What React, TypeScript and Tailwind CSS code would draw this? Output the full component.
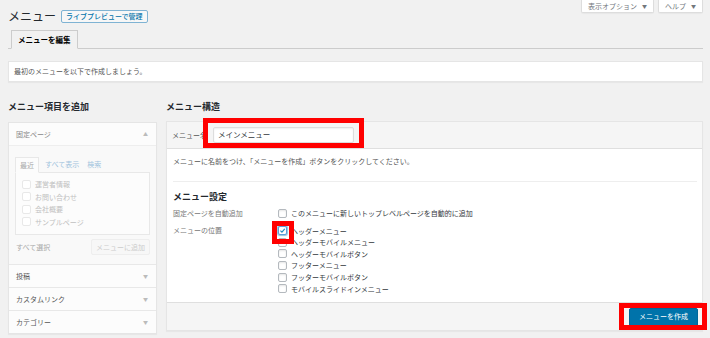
import * as React from 'react'

function Check({ checked = false, faded = false }: { checked?: boolean; faded?: boolean }) {
  return (
    <span
      className={
        'relative inline-flex h-[9px] w-[9px] shrink-0 items-center justify-center rounded-[2px] border bg-white ' +
        (faded
          ? 'border-[#e8e8e8]'
          : checked
            ? 'border-[#5b9dd9] shadow-[0_0_1px_1px_rgba(30,140,190,0.5)]'
            : 'border-[#b4b9be] shadow-[inset_0_1px_2px_rgba(0,0,0,0.1)]')
      }
    >
      {checked && (
        <svg viewBox="0 0 10 10" className="h-[7px] w-[7px]">
          <path d="M2 5.2 L4.2 7.4 L8.2 2.6" fill="none" stroke="#1e8cbe" strokeWidth="1.6" />
        </svg>
      )}
    </span>
  )
}

const locations = [
  'ヘッダーメニュー',
  'ヘッダーモバイルメニュー',
  'ヘッダーモバイルボタン',
  'フッターメニュー',
  'フッターモバイルボタン',
  'モバイルスライドインメニュー',
]

const pages = ['運営者情報', 'お問い合わせ', '会社概要', 'サンプルページ']

export default function App() {
  return (
    <div className="h-[338px] w-[710px] overflow-hidden bg-[#f1f1f1] pr-[7px] pl-[8px] font-['Noto_Sans_CJK_JP',sans-serif] text-[#444]">
      {/* page header */}
      <div className="flex h-[24px] items-start justify-between">
        <div className="flex items-center pt-[8px]">
          <span className="text-[12px] leading-[16px] text-[#23282d]">メニュー</span>
          <span className="ml-[5px] h-[13px] rounded-[2px] border border-[#7fb3d3] bg-[#f7f7f7] px-[4px] text-[7px] leading-[11px] font-medium text-[#0073aa]">
            ライブプレビューで管理
          </span>
        </div>
        <div className="flex gap-[4px]">
          <span className="flex h-[13px] w-[73px] items-center justify-center gap-[5px] rounded-b-[2px] border border-t-0 border-[#ddd] bg-white text-[7px] text-[#72777c] shadow-[0_1px_1px_rgba(0,0,0,0.04)]">
            表示オプション<span className="text-[5px]">▼</span>
          </span>
          <span className="flex h-[13px] w-[45px] items-center justify-center gap-[5px] rounded-b-[2px] border border-t-0 border-[#ddd] bg-white text-[7px] text-[#72777c] shadow-[0_1px_1px_rgba(0,0,0,0.04)]">
            ヘルプ<span className="text-[5px]">▼</span>
          </span>
        </div>
      </div>

      {/* tabs */}
      <div className="mt-[6px] flex border-b border-[#ccc] pl-[3px]">
        <span className="-mb-px h-[19px] border border-[#ccc] border-b-[#f1f1f1] bg-[#f1f1f1] px-[6px] text-[7.5px] leading-[17px] font-bold text-[#000]">
          メニューを編集
        </span>
      </div>

      {/* notice */}
      <div className="mt-[12px] flex h-[21px] items-center border border-[#e5e5e5] bg-white pl-[5px] text-[7px] text-[#555] shadow-[0_1px_1px_rgba(0,0,0,0.04)]">
        最初のメニューを以下で作成しましょう。
      </div>

      <div className="flex items-start gap-[9px]">
        {/* add menu items */}
        <div className="w-[149px] shrink-0 pt-[19px]">
          <div className="h-[12px] text-[9px] leading-[12px] font-bold text-[#23282d]">メニュー項目を追加</div>
          <div className="mt-[9px] border border-[#e5e5e5] bg-[#fcfcfc] shadow-[0_1px_1px_rgba(0,0,0,0.04)]">
            <div className="flex h-[23px] items-center justify-between border-b border-[#eee] pr-[8px] pl-[7px] text-[7px] text-[#888]">
              固定ページ<span className="text-[5px] text-[#bbb]">▲</span>
            </div>
            <div className="bg-[#f9f9f9] px-[6px] pt-[11px] pb-[9px]">
              <div className="flex items-end text-[7px]">
                <span className="-mb-px h-[16px] border border-[#e8e8e8] border-b-[#fcfcfc] bg-[#fcfcfc] px-[4px] leading-[15px] text-[#aaa]">
                  最近
                </span>
                <span className="ml-[6px] leading-[15px] text-[#9fc3dd]">すべて表示</span>
                <span className="ml-[8px] leading-[15px] text-[#9fc3dd]">検索</span>
              </div>
              <div className="border border-[#e8e8e8] bg-[#fcfcfc] pt-[5px] pb-[6px] pl-[6px]">
                {pages.map((p) => (
                  <div key={p} className="flex h-[12.5px] items-center gap-[4px] text-[7px] text-[#c0c0c0]">
                    <Check faded />
                    {p}
                  </div>
                ))}
              </div>
              <div className="mt-[4px] flex h-[16px] items-center justify-between pl-[1px] text-[7px]">
                <span className="text-[#aaa]">すべて選択</span>
                <span className="flex h-[16px] w-[59px] items-center justify-center rounded-[2px] border border-[#eee] bg-[#f7f7f7] text-[#ccc]">
                  メニューに追加
                </span>
              </div>
            </div>
            {['投稿', 'カスタムリンク', 'カテゴリー'].map((t) => (
              <div
                key={t}
                className="flex h-[23px] items-center justify-between border-t border-[#e8e8e8] pr-[8px] pl-[7px] text-[7px] text-[#555]"
              >
                {t}
                <span className="text-[5px] text-[#bbb]">▼</span>
              </div>
            ))}
          </div>
        </div>

        {/* menu structure */}
        <div className="flex-1 pt-[19px]">
          <div className="h-[12px] text-[9px] leading-[12px] font-bold text-[#23282d]">メニュー構造</div>
          <div className="mt-[8px] flex h-[210px] flex-col border border-[#e5e5e5] bg-white shadow-[0_1px_1px_rgba(0,0,0,0.04)]">
            <div className="flex h-[27px] items-center border-b border-[#dfdfdf] bg-[#f5f5f5] pl-[5px]">
              <span className="w-[41px] text-[7px] text-[#555]">メニュー名</span>
              <div className="relative">
                <div className="h-[16px] w-[141px] rounded-[2px] border border-[#ddd] bg-white pl-[4px] text-[7.5px] leading-[14px] text-[#32373c] shadow-[inset_0_1px_2px_rgba(0,0,0,0.07)]">
                  メインメニュー
                </div>
                <span className="absolute -top-[9px] -right-[10px] -bottom-[5px] -left-[10px] border-[5px] border-[#f00]" />
              </div>
            </div>

            <div className="flex-1 pr-[5px] pl-[6px] pt-[7px]">
              <div className="border-b border-[#eee] pb-[15px] text-[7px] leading-[10px] text-[#555]">
                メニューに名前をつけ、「メニューを作成」ボタンをクリックしてください。
              </div>
              <div className="mt-[9px] text-[9px] leading-[12px] font-bold text-[#23282d]">メニュー設定</div>
              <div className="mt-[4px] grid grid-cols-[105px_1fr] text-[7px]">
                <span className="leading-[12px] text-[#777]">固定ページを自動追加</span>
                <div className="flex h-[12px] items-center gap-[4px] text-[#32373c]">
                  <Check />
                  このメニューに新しいトップレベルページを自動的に追加
                </div>
                <span className="mt-[6px] leading-[11.6px] text-[#777]">メニューの位置</span>
                <div className="mt-[6px]">
                  {locations.map((l, i) => (
                    <div key={l} className="flex h-[11.6px] items-center gap-[4px] text-[#32373c]">
                      <span className="relative flex">
                        <Check checked={i === 0} />
                        {i === 0 && (
                          <span className="absolute -top-[5px] -right-[7px] -bottom-[9px] -left-[6px] z-10 border-[5px] border-[#f00]" />
                        )}
                      </span>
                      {l}
                    </div>
                  ))}
                </div>
              </div>
            </div>

            <div className="flex h-[28px] items-center justify-end border-t border-[#dfdfdf] bg-[#f5f5f5] pr-[4px]">
              <span className="relative flex h-[18px] items-center rounded-[2px] border border-[#006799] bg-[#0073aa] px-[9px] text-[7px] text-white shadow-[0_1px_0_#006799]">
                メニューを作成
                <span className="absolute -top-[6px] -right-[10px] -bottom-[5px] -left-[11px] border-[5px] border-[#f00]" />
              </span>
            </div>
          </div>
        </div>
      </div>
    </div>
  )
}
